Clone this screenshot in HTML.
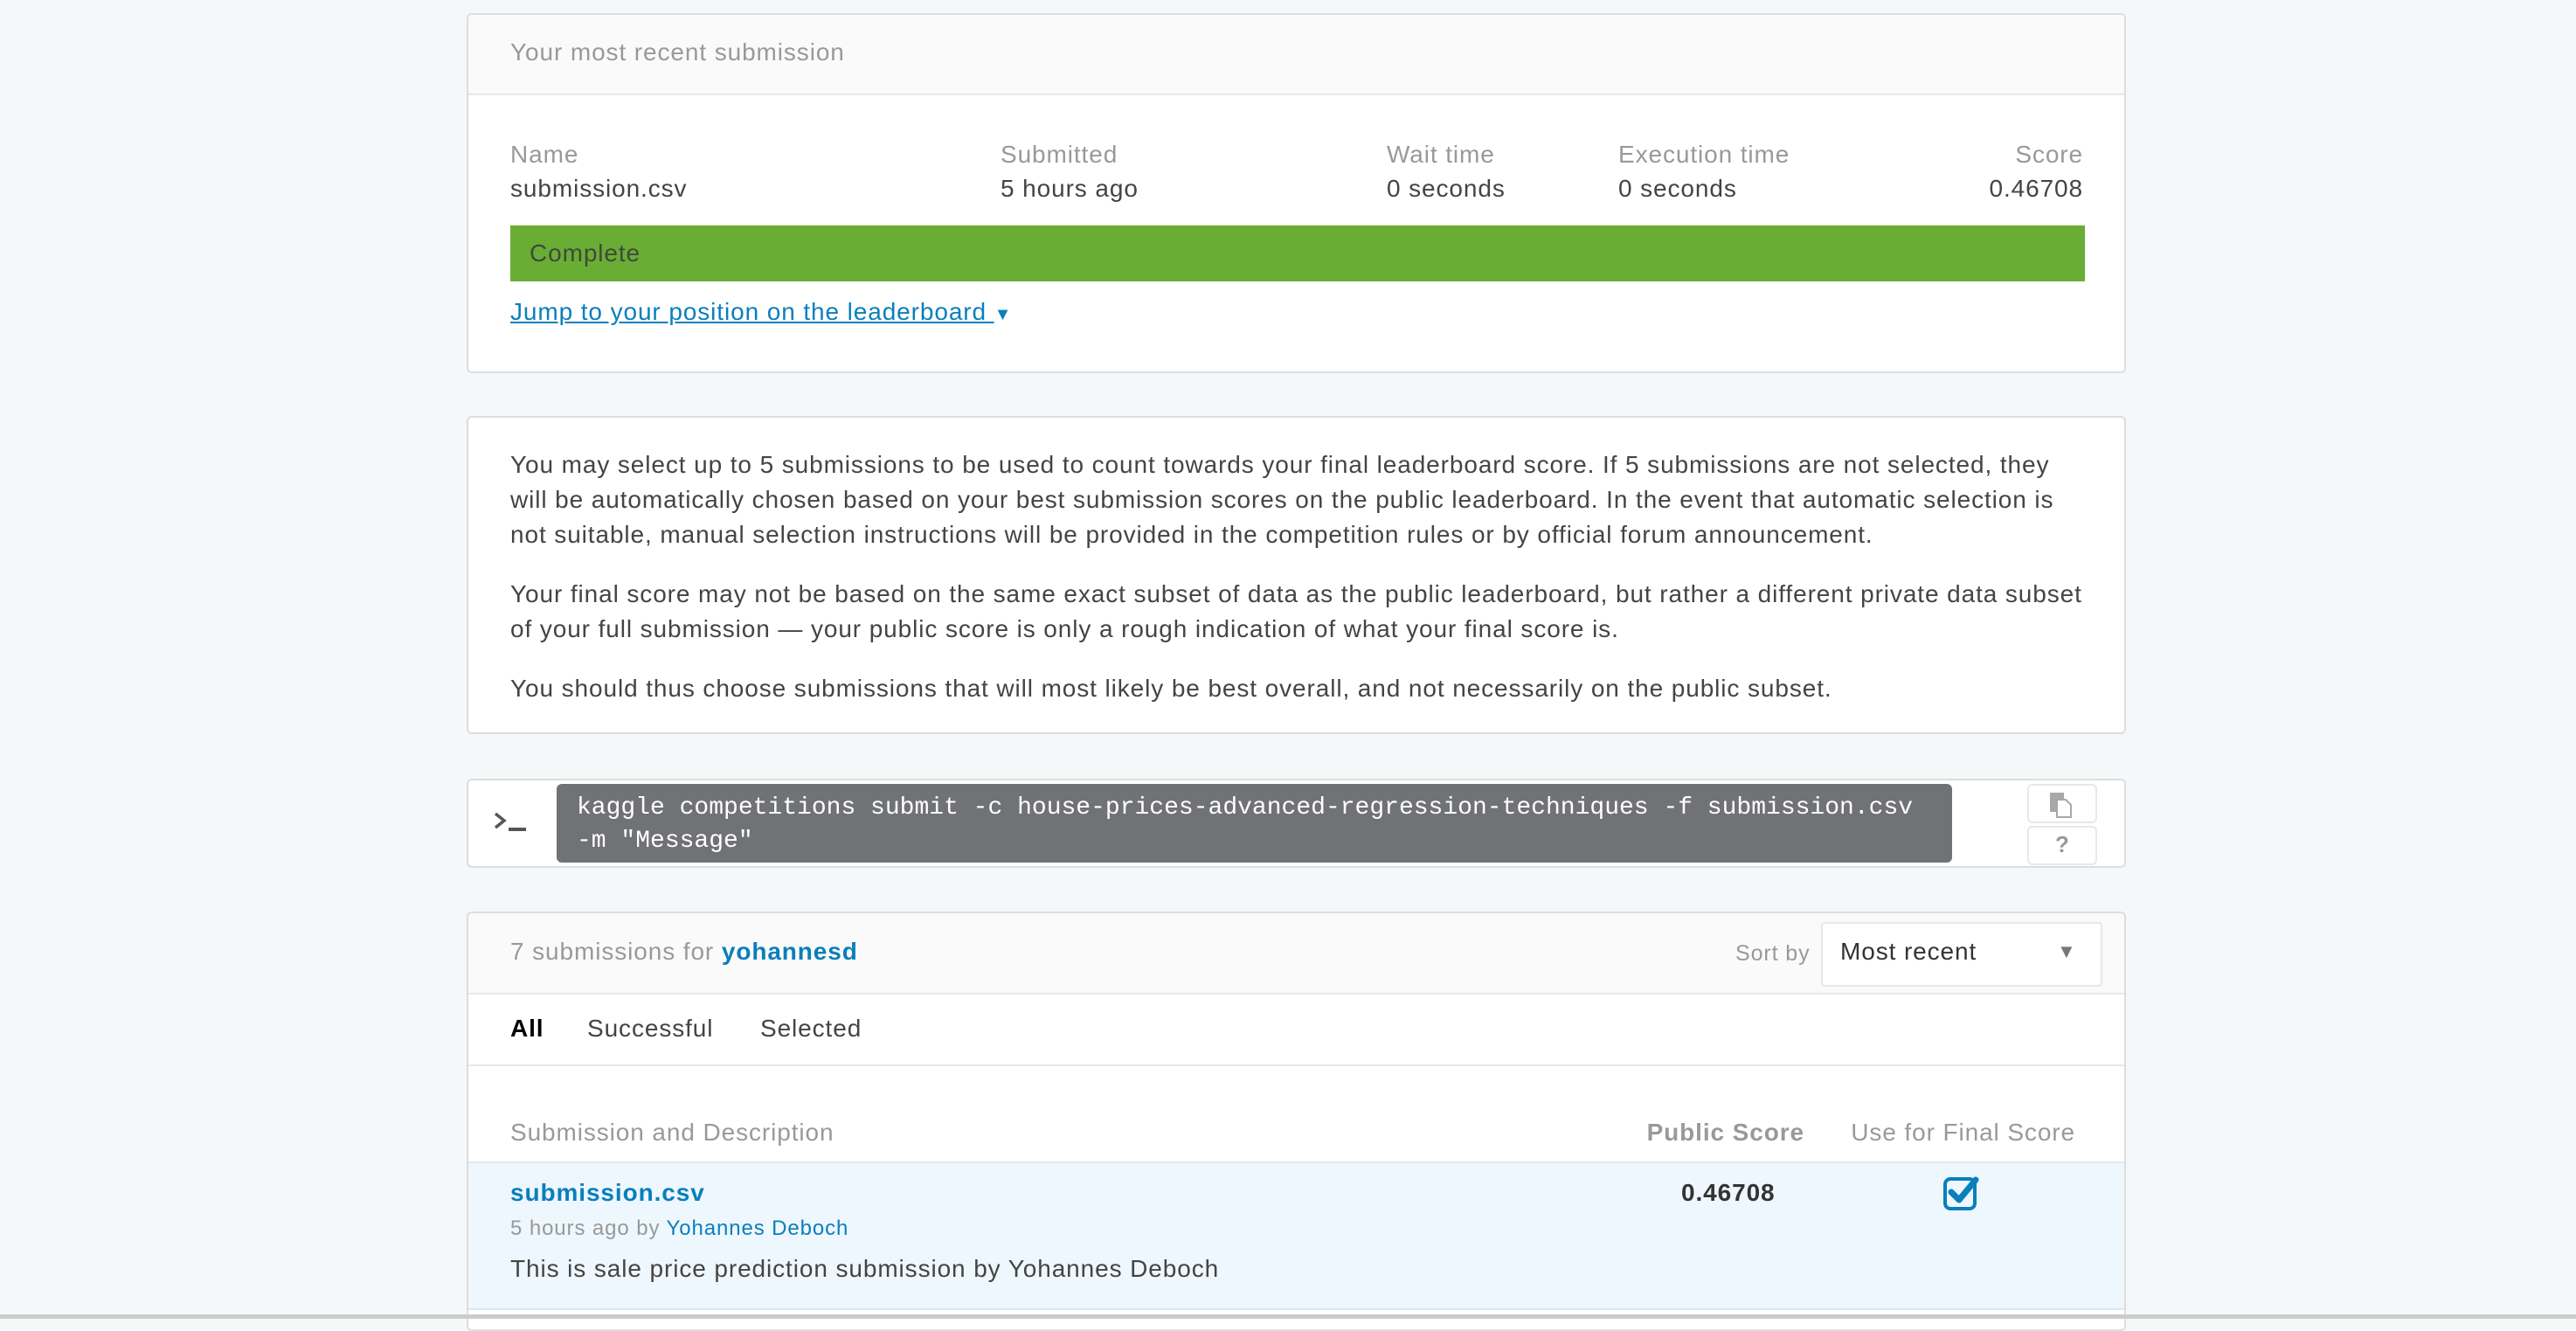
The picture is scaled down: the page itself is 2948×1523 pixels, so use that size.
<!DOCTYPE html>
<html><head><meta charset="utf-8"><style>
*{box-sizing:border-box;margin:0;padding:0}
body{width:2948px;height:1509px;background:#f5f8f9;font-family:"Liberation Sans",sans-serif;position:relative;overflow:hidden;color:#444;letter-spacing:0.9px}
.card{position:absolute;left:534px;width:1899px;background:#fff;border:2px solid #dcdddf;border-radius:6px;overflow:hidden}
.t{position:absolute;white-space:nowrap;font-size:28px;line-height:34px}
.lab{color:#999}
.blue{color:#0a7fbc}
</style></head><body>

<div class="card" style="top:15px;height:412px">
  <div style="position:absolute;left:0;top:0;right:0;height:92px;background:#fafafa;border-bottom:2px solid #e8e8e8"></div>
  <div class="t lab" style="left:48px;top:26px">Your most recent submission</div>
  <div class="t lab" style="left:48px;top:143px">Name</div>
  <div class="t" style="left:48px;top:182px">submission.csv</div>
  <div class="t lab" style="left:609px;top:143px">Submitted</div>
  <div class="t" style="left:609px;top:182px">5 hours ago</div>
  <div class="t lab" style="left:1051px;top:143px">Wait time</div>
  <div class="t" style="left:1051px;top:182px">0 seconds</div>
  <div class="t lab" style="left:1316px;top:143px">Execution time</div>
  <div class="t" style="left:1316px;top:182px">0 seconds</div>
  <div class="t lab" style="right:47px;top:143px">Score</div>
  <div class="t" style="right:47px;top:182px">0.46708</div>
  <div style="position:absolute;left:48px;top:241px;width:1802px;height:64px;background:#6aad35"></div>
  <div class="t" style="left:70px;top:256px;color:#3f4a3a">Complete</div>
  <div class="t blue" style="left:48px;top:323px;text-decoration:underline">Jump to your position on the leaderboard <span style="font-size:20px;text-decoration:none;display:inline-block">▼</span></div>
</div>

<div class="card" style="top:476px;height:364px">
  <div style="position:absolute;left:48px;top:34px;width:1810px;font-size:28px;line-height:40px;color:#444">
    <p>You may select up to 5 submissions to be used to count towards your final leaderboard score. If 5 submissions are not selected, they will be automatically chosen based on your best submission scores on the public leaderboard. In the event that automatic selection is not suitable, manual selection instructions will be provided in the competition rules or by official forum announcement.</p>
    <p style="margin-top:28px">Your final score may not be based on the same exact subset of data as the public leaderboard, but rather a different private data subset of your full submission — your public score is only a rough indication of what your final score is.</p>
    <p style="margin-top:28px">You should thus choose submissions that will most likely be best overall, and not necessarily on the public subset.</p>
  </div>
</div>

<div class="card" style="top:891px;height:102px">
  <svg style="position:absolute;left:28px;top:34px" width="44" height="30"><path d="M3 4 L13 12 L3 20" stroke="#555" stroke-width="3.5" fill="none"/><rect x="18" y="20" width="20" height="4" fill="#555"/></svg>
  <div style="position:absolute;left:101px;top:4px;width:1597px;height:90px;background:#717275;border-radius:6px"></div>
  <div style="position:absolute;left:124px;top:13px;font-family:'Liberation Mono',monospace;letter-spacing:0;font-size:28px;line-height:38px;color:#fff;white-space:pre">kaggle competitions submit -c house-prices-advanced-regression-techniques -f submission.csv
-m "Message"</div>
  <div style="position:absolute;left:1784px;top:4px;width:80px;height:45px;border:2px solid #e8e8e8;border-radius:6px"></div>
  <svg style="position:absolute;left:1810px;top:14px" width="30" height="30"><rect x="0" y="0" width="16" height="22" fill="#a8a8a8"/><path d="M8 8 H18 L24 14 V28 H8 Z" fill="#fff" stroke="#a8a8a8" stroke-width="2"/></svg>
  <div style="position:absolute;left:1784px;top:52px;width:80px;height:45px;border:2px solid #e8e8e8;border-radius:6px"></div>
  <div style="position:absolute;left:1816px;top:58px;font-size:26px;font-weight:bold;color:#999">?</div>
</div>

<div class="card" style="top:1043px;height:480px">
  <div style="position:absolute;left:0;top:0;right:0;height:93px;background:#fafafa;border-bottom:2px solid #e8e8e8"></div>
  <div class="t lab" style="left:48px;top:27px">7 submissions for <b class="blue">yohannesd</b></div>
  <div class="t lab" style="left:1450px;top:29px;font-size:25px">Sort by</div>
  <div style="position:absolute;left:1548px;top:10px;width:322px;height:74px;background:#fff;border:2px solid #e8e8e8;border-radius:4px"></div>
  <div class="t" style="left:1570px;top:27px;color:#333">Most recent</div>
  <div class="t" style="left:1818px;top:27px;font-size:22px;color:#777">▼</div>
  <div class="t" style="left:48px;top:115px;color:#000;font-weight:bold">All</div>
  <div class="t" style="left:136px;top:115px">Successful</div>
  <div class="t" style="left:334px;top:115px">Selected</div>
  <div style="position:absolute;left:0;right:0;top:173px;border-top:2px solid #e8e8e8"></div>
  <div class="t lab" style="left:48px;top:234px">Submission and Description</div>
  <div class="t lab" style="right:366px;top:234px;font-weight:bold">Public Score</div>
  <div class="t lab" style="right:56px;top:234px">Use for Final Score</div>
  <div style="position:absolute;left:0;right:0;top:284px;height:170px;background:#eef7fd;border-top:2px solid #dde9f0;border-bottom:2px solid #dde9f0"></div>
  <div class="t blue" style="left:48px;top:303px;font-weight:bold">submission.csv</div>
  <div class="t lab" style="left:48px;top:344px;font-size:24px">5 hours ago by <span class="blue">Yohannes Deboch</span></div>
  <div class="t" style="left:48px;top:390px">This is sale price prediction submission by Yohannes Deboch</div>
  <div class="t" style="left:1388px;top:303px;font-weight:bold;color:#333">0.46708</div>
  <svg style="position:absolute;left:1687px;top:299px" width="50" height="44"><rect x="3" y="5" width="34" height="34" rx="6" fill="none" stroke="#0a7fbc" stroke-width="4"/><path d="M10 20 L19 29 L38 6" fill="none" stroke="#0a7fbc" stroke-width="7" stroke-linecap="round" stroke-linejoin="round"/></svg>
</div>
<div style="position:absolute;left:0;right:0;top:1504px;height:5px;background:#ccc"></div>
</body></html>
